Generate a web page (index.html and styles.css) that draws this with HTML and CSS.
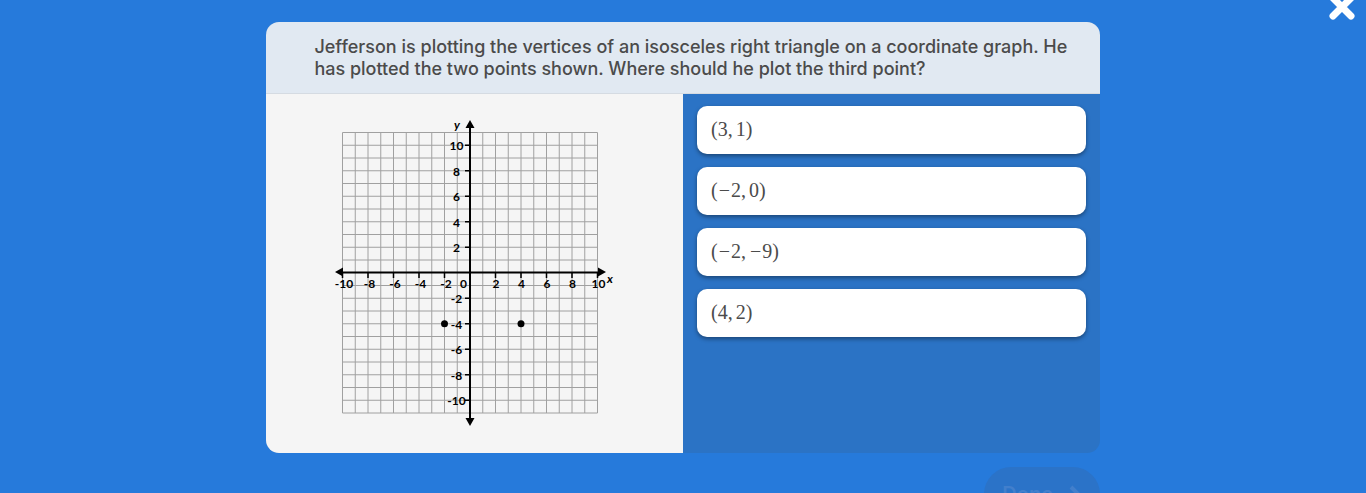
FILE: index.html
```
<!DOCTYPE html>
<html lang="en">
<head>
	<meta charset="UTF-8">
	<title>Question</title>
	<link rel="stylesheet" href="styles.css">
</head>
<body>
<button class="close" type="button" aria-label="Close">
	<svg width="26" height="26" viewBox="0 0 26 26"><path d="M4 4L22 22M22 4L4 22" stroke="#fff" stroke-width="7" stroke-linecap="round"/></svg>
</button>
<div class="quiz">
	<div class="card">
		<div class="question">Jefferson is plotting the vertices of an isosceles right triangle on a coordinate graph. He has plotted the two points shown. Where should he plot the third point?</div>
		<div class="content">
			<div class="figure">
				<svg class="graph" width="290" height="320" viewBox="0 0 290 320" role="img" aria-label="Coordinate graph with points at (-2, -4) and (4, -4)">
					<!-- grid -->
					<g fill="none" stroke="#a0a0a0" stroke-width="1">
						<path d="M12.5 16.5v280.5M25.25 16.5v280.5M38 16.5v280.5M50.75 16.5v280.5M63.5 16.5v280.5M76.25 16.5v280.5M89 16.5v280.5M101.75 16.5v280.5M114.5 16.5v280.5M127.25 16.5v280.5M152.75 16.5v280.5M165.5 16.5v280.5M178.25 16.5v280.5M191 16.5v280.5M203.75 16.5v280.5M216.5 16.5v280.5M229.25 16.5v280.5M242 16.5v280.5M254.75 16.5v280.5M267.5 16.5v280.5"/>
						<path d="M12.5 16.5h255M12.5 29.25h255M12.5 42h255M12.5 54.75h255M12.5 67.5h255M12.5 80.25h255M12.5 93h255M12.5 105.75h255M12.5 118.5h255M12.5 131.25h255M12.5 144h255M12.5 169.5h255M12.5 182.25h255M12.5 195h255M12.5 207.75h255M12.5 220.5h255M12.5 233.25h255M12.5 246h255M12.5 258.75h255M12.5 271.5h255M12.5 284.25h255M12.5 297h255"/>
					</g>
					<!-- axes and ticks -->
					<path d="M140 10v294M10 156.5h260" stroke="#000" stroke-width="2"/>
					<path d="M140 4l4.5 8h-9zM140 310l4.5-8h-9zM5 156l8-4.5v9zM276 156l-8-4.5v9z"/>
					<path d="M135 29.25h5M135 54.75h5M135 80.25h5M135 105.75h5M135 131.25h5M135 182.25h5M135 207.75h5M135 233.25h5M135 258.75h5M135 284.25h5M12.5 157v5M38 157v5M63.5 157v5M89 157v5M114.5 157v5M165.5 157v5M191 157v5M216.5 157v5M242 157v5M267.5 157v5" stroke="#000" stroke-width="1.5"/>
					<g class="labels">
						<text x="126.5" y="34">10</text>
						<text x="126.5" y="60">8</text>
						<text x="126.5" y="85">6</text>
						<text x="126.5" y="111">4</text>
						<text x="126.5" y="136">2</text>
						<text x="126.5" y="187">-2</text>
						<text x="126.5" y="213">-4</text>
						<text x="126.5" y="238">-6</text>
						<text x="126.5" y="264">-8</text>
						<text x="126.5" y="289">-10</text>
						<text x="14" y="172">-10</text>
						<text x="39.5" y="172">-8</text>
						<text x="65" y="172">-6</text>
						<text x="90.5" y="172">-4</text>
						<text x="116" y="172">-2</text>
						<text x="133.5" y="172">0</text>
						<text x="166" y="172">2</text>
						<text x="191.5" y="172">4</text>
						<text x="217" y="172">6</text>
						<text x="242.5" y="172">8</text>
						<text x="268.5" y="172">10</text>
						<text class="axis" x="127" y="13">y</text>
						<text class="axis" x="280" y="167">x</text>
					</g>
					<!-- plotted points -->
					<circle cx="114.5" cy="207.75" r="3.5"/>
					<circle cx="191" cy="207.75" r="3.5"/>
				</svg>
			</div>
			<div class="answers">
				<button class="answer" type="button">(3,<span class="gap"></span>1)</button>
				<button class="answer" type="button">(<span class="minus">−</span>2,<span class="gap"></span>0)</button>
				<button class="answer" type="button">(<span class="minus">−</span>2,<span class="gap"></span><span class="minus">−</span>9)</button>
				<button class="answer" type="button">(4,<span class="gap"></span>2)</button>
			</div>
		</div>
	</div>
	<button class="done" type="button" disabled>Done
		<svg width="12" height="18" viewBox="0 0 12 18"><path d="M2 2l7 7-7 7" fill="none" stroke="currentColor" stroke-width="4"/></svg>
	</button>
</div>
</body>
</html>
```

FILE: styles.css
```
* {
	box-sizing: border-box;
}
body {
	margin: 0;
	height: 100vh;
	overflow: hidden;
	background-color: #267adb;
	font-family: Inter, "Open Sans", sans-serif;
}
button {
	border: 0;
	padding: 0;
	font-family: inherit;
	cursor: pointer;
}
.close {
	position: absolute;
	top: -6px;
	right: 11px;
	width: 26px;
	height: 26px;
	background: none;
}
.close svg {
	display: block;
}
.quiz {
	width: 61%;
	margin: 0 auto;
	padding-top: 22px;
}
.card {
	border-radius: 13px;
	overflow: hidden;
	background-color: #2b73c5;
}
.question {
	padding: 14px 24px 13px 48px;
	border-bottom: 1px solid #d5dbe2;
	background-color: #e1e9f2;
	color: #4b4b4b;
	font-size: 18px;
	font-weight: 500;
	line-height: 22px;
}
.content {
	display: grid;
	grid-template-columns: 1fr 1fr;
}
.figure {
	display: flex;
	justify-content: center;
	padding: 22px 0 17px;
	background-color: #f5f5f5;
}
.graph {
	display: block;
}
.labels {
	font-family: Lato, sans-serif;
	font-size: 12px;
	font-weight: bold;
	text-anchor: middle;
}
.axis {
	font-style: italic;
}
.answers {
	display: flex;
	flex-direction: column;
	gap: 13px;
	padding: 12px 14px;
}
.answer {
	height: 48px;
	padding: 0 14px 2px;
	border-radius: 10px;
	background-color: #fff;
	box-shadow: 0 2px 4px rgba(0, 0, 0, .4);
	color: #4b4b4b;
	font-family: "Liberation Serif", serif;
	font-size: 20px;
	text-align: left;
}
.gap {
	margin-left: 3px;
}
.minus {
	margin: 0 1px;
}
.done {
	display: flex;
	align-items: center;
	justify-content: center;
	gap: 16px;
	width: 116px;
	height: 54px;
	margin: 14px 0 0 auto;
	border-radius: 27px;
	background-color: #2b73c8;
	color: #427fcc;
	font-size: 20px;
	font-weight: 600;
}
```
